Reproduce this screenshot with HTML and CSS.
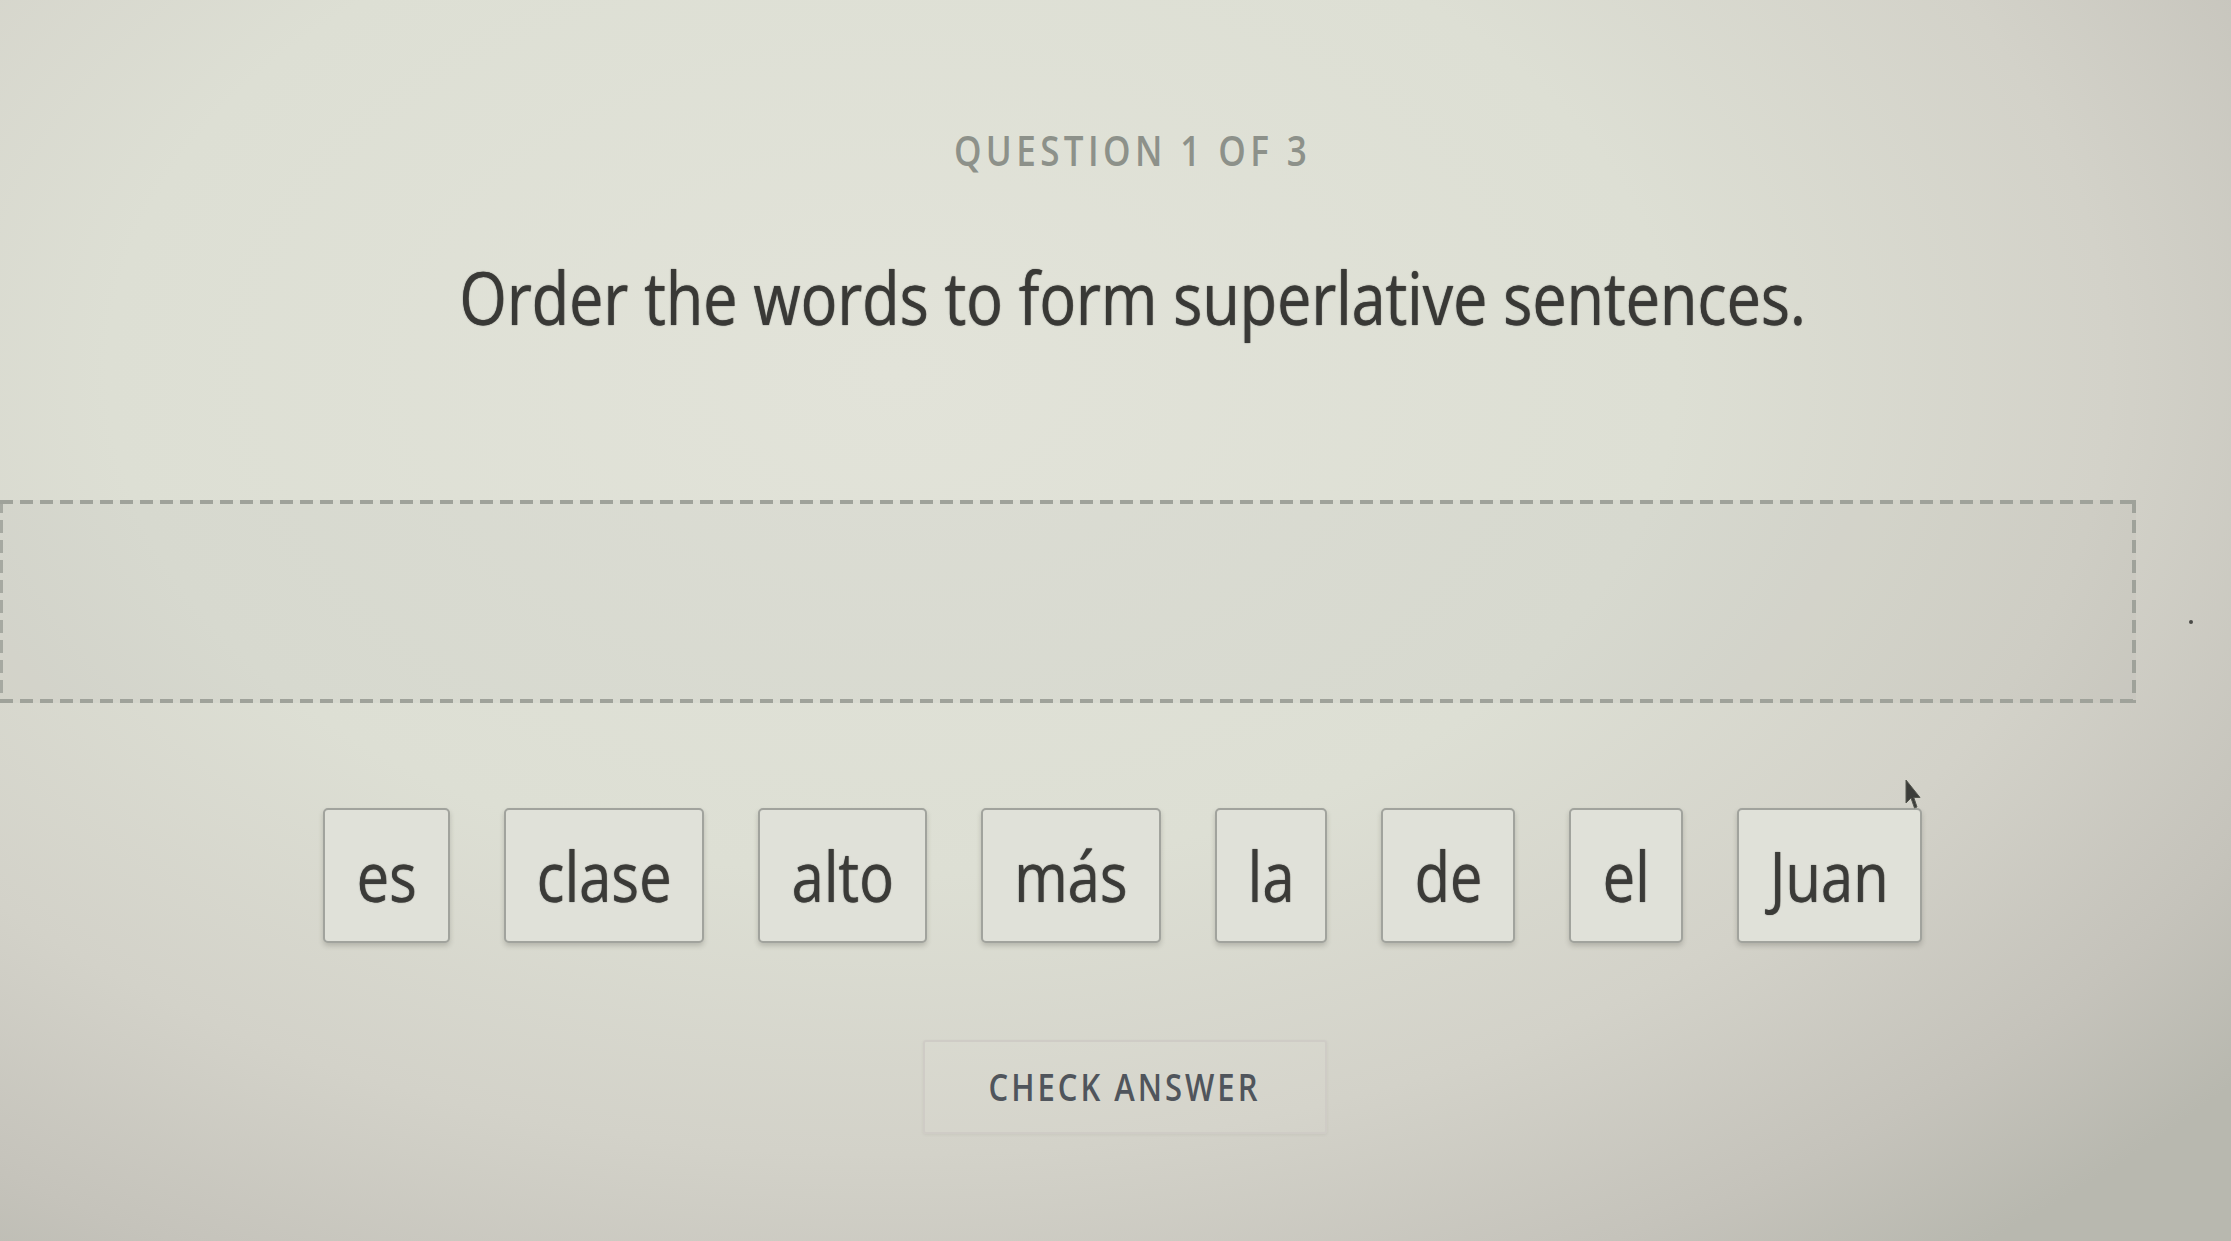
FILE: index.html
```html
<!DOCTYPE html>
<html lang="en">
<head>
<meta charset="utf-8">
<title>Question 1 of 3</title>
<link rel="stylesheet" href="styles.css">
</head>
<body>
<main class="page">
  <header class="head">
    <div class="counter"><span class="tall">QUESTION 1 OF 3</span></div>
    <h1 class="prompt"><span class="tall">Order the words to form superlative sentences.</span></h1>
  </header>

  <div class="dropzone"></div>

  <div class="bank">
    <div class="tile"><span class="tall">es</span></div>
    <div class="tile"><span class="tall">clase</span></div>
    <div class="tile"><span class="tall">alto</span></div>
    <div class="tile"><span class="tall">más</span></div>
    <div class="tile"><span class="tall">la</span></div>
    <div class="tile"><span class="tall">de</span></div>
    <div class="tile"><span class="tall">el</span></div>
    <div class="tile"><span class="tall">Juan</span></div>
  </div>

  <div class="actions">
    <button class="check" type="button"><span class="tall">CHECK ANSWER</span></button>
  </div>

  <svg class="cursor" width="18" height="32" viewBox="0 0 18 32" aria-hidden="true">
    <path d="M2 1 L2 24 L7 19 L10.5 29 L13 28 L9.8 18.5 L16 18.5 Z" fill="#3c3d3a" stroke="#55574f" stroke-width="1"/>
  </svg>
  <span class="speck"></span>
</main>
</body>
</html>
```

FILE: styles.css
```css
html, body {
  margin: 0;
  padding: 0;
  height: 100%;
}

body {
  font-family: "Open Sans", "Noto Sans", sans-serif;
  background: radial-gradient(ellipse 78% 90% at 40% 30%, #e2e3d9 0%, #dddfd4 45%, #d3d2c9 70%, #c5c3bb 88%, #b8b8af 100%);
  overflow: hidden;
}

.page {
  position: relative;
  width: 2231px;
  height: 1241px;
  display: flex;
  flex-direction: column;
}

.tall {
  display: inline-block;
  transform: scaleY(1.2);
}

.head {
  padding-top: 120px;
  padding-left: 34px;
  text-align: center;
}

.counter {
  height: 60px;
  line-height: 60px;
  font-size: 35px;
  font-weight: 600;
  letter-spacing: 4.4px;
  color: #8d918a;
}

.prompt {
  margin: 67px 0 0;
  height: 100px;
  line-height: 100px;
  font-size: 61px;
  font-weight: 400;
  color: #393936;
  text-shadow: 0 0 1.2px rgba(40, 40, 38, 0.7), 0.6px 0 0 rgba(40, 40, 38, 0.6);
}

.dropzone {
  margin-top: 153px;
  width: 2136px;
  height: 203px;
  box-sizing: border-box;
  background:
    repeating-linear-gradient(90deg, #9fa29a 0 13px, transparent 13px 20px) top left / 100% 4px no-repeat,
    repeating-linear-gradient(90deg, #9fa29a 0 13px, transparent 13px 20px) bottom left / 100% 4px no-repeat,
    repeating-linear-gradient(180deg, #a6a9a1 0 13px, transparent 13px 20px) top left / 3px 100% no-repeat,
    repeating-linear-gradient(180deg, #9fa29a 0 13px, transparent 13px 20px) top right / 4px 100% no-repeat,
    rgba(120, 118, 108, 0.05);
}

.bank {
  margin-top: 105px;
  padding-left: 14px;
  display: flex;
  justify-content: center;
  gap: 54px;
}

.tile {
  height: 135px;
  box-sizing: border-box;
  padding: 0 31px;
  display: flex;
  align-items: center;
  justify-content: center;
  border: 2px solid #a1a39d;
  border-radius: 5px;
  background: #e0e1d9;
  box-shadow: 0 3px 5px rgba(60, 60, 50, 0.22);
  font-size: 58px;
  font-weight: 400;
  line-height: 1;
  color: #3b3b38;
  text-shadow: 0 0 1.2px rgba(40, 40, 38, 0.6), 0.5px 0 0 rgba(40, 40, 38, 0.5);
}

.actions {
  margin-top: 97px;
  padding-left: 18px;
  display: flex;
  justify-content: center;
}

.check {
  width: 404px;
  height: 94px;
  box-sizing: border-box;
  border: 2px solid #cfccc6;
  border-radius: 3px;
  background: rgba(255, 255, 255, 0.05);
  box-shadow: 0 1px 3px rgba(80, 80, 70, 0.08);
  font-family: "Open Sans", "Noto Sans", sans-serif;
  font-size: 31px;
  font-weight: 600;
  letter-spacing: 3px;
  color: #50555c;
  padding: 0;
}

.cursor {
  position: absolute;
  left: 1904px;
  top: 779px;
}

.speck {
  position: absolute;
  left: 2189px;
  top: 620px;
  width: 4px;
  height: 4px;
  border-radius: 50%;
  background: #4a4b47;
}
```
